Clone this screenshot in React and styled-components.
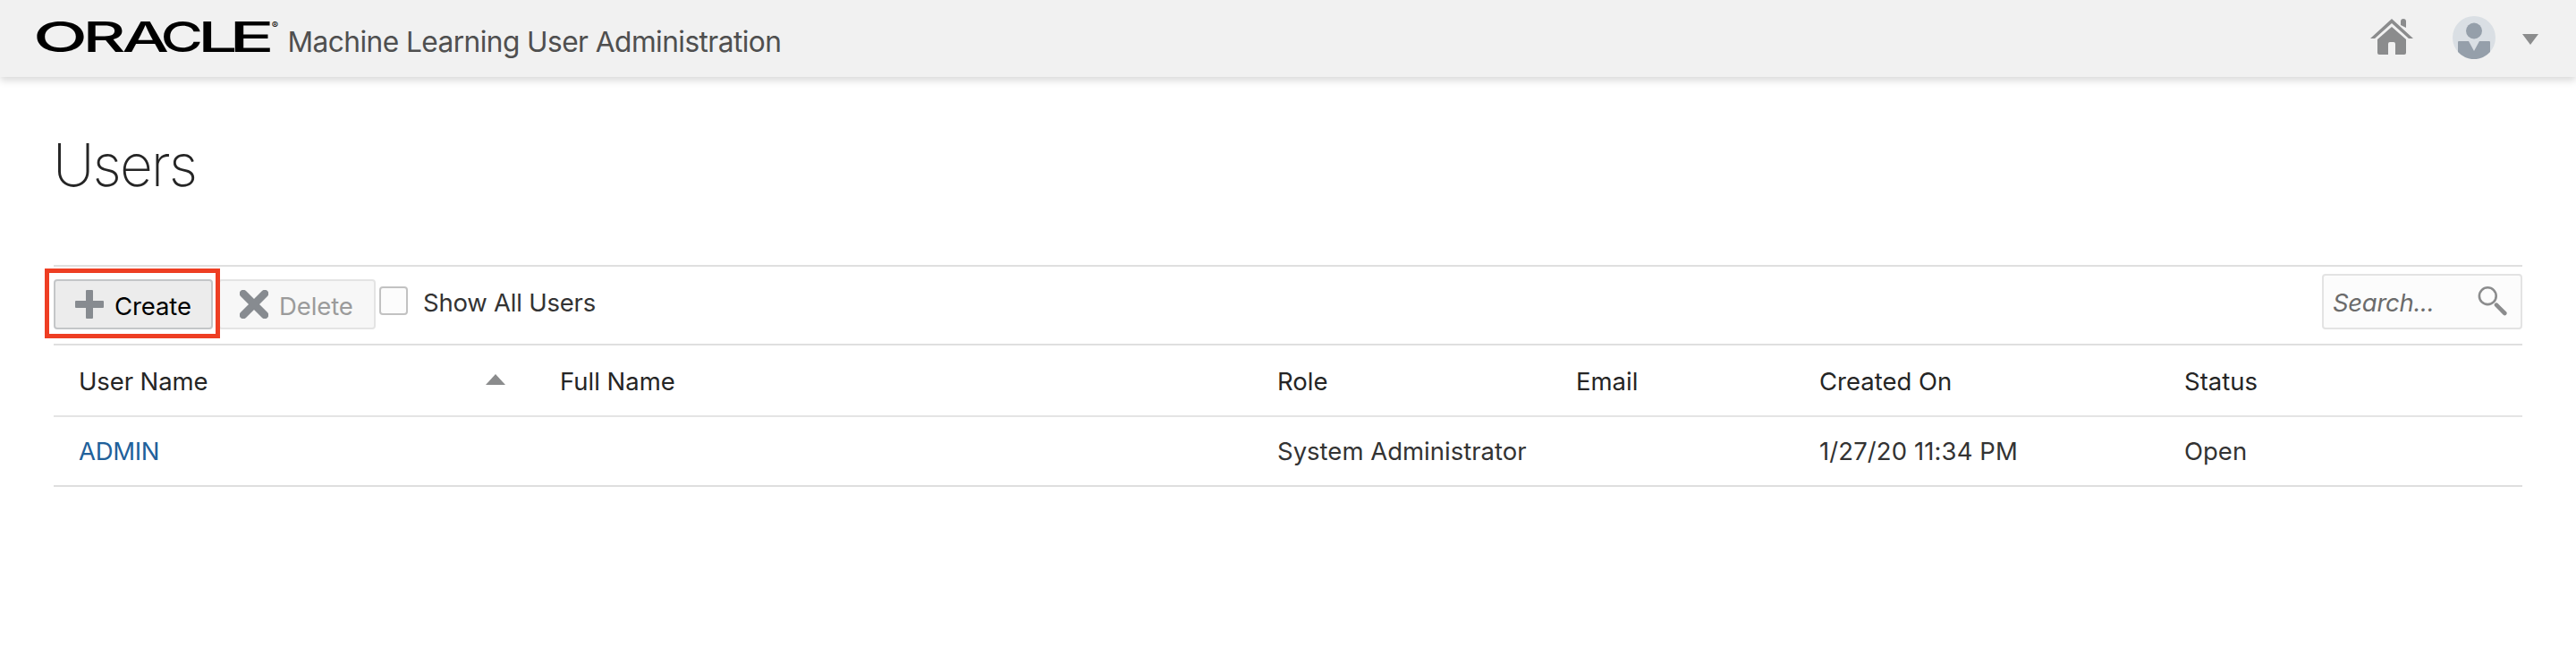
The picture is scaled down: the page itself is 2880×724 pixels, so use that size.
import React from "react";
import styled, { createGlobalStyle } from "styled-components";

const GlobalStyle = createGlobalStyle`
  * { box-sizing: border-box; }
  body { margin: 0; background: #fff; font-family: Inter, "Liberation Sans", sans-serif; font-size: 27.5px; line-height: 36px; color: #333; }
`;

const Page = styled.div`
  min-height: 724px;
  background: #fff;
`;

const Header = styled.header`
  height: 86px;
  display: flex;
  align-items: flex-start;
  background: #f1f1f1;
  padding: 0 36px;
  box-shadow: 0 4px 8px rgba(0, 0, 0, 0.15);
`;
const LogoSvg = styled.svg`
  display: block;
  width: 285.5px;
  height: 86px;
  flex: none;
`;
const AppTitle = styled.div`
  flex: 1;
  padding-top: 27px;
  line-height: 40px;
  font-size: 31.7px;
  color: #4f4f4f;
  white-space: nowrap;
  letter-spacing: -0.58px;
`;
const HeaderIcons = styled.div`
  display: flex;
  height: 84px;
  align-items: center;
`;
const HomeIcon = styled.svg`
  width: 48px;
  height: 42px;
  margin-right: 44px;
`;
const Avatar = styled.svg`
  width: 48px;
  height: 48px;
  margin-right: 30px;
`;
const Caret = styled.svg`
  width: 18px;
  height: 12px;
  margin-top: 4px;
  margin-right: 6px;
`;

const Main = styled.main`
  padding: 0 60px;
`;
const Heading = styled.h1`
  margin: 0 0 0 -1px;
  height: 210px;
  padding-top: 58px;
  line-height: 80px;
  font-size: 66.5px;
  font-weight: 200;
  color: #252525;
  letter-spacing: -2px;
  transform: scaleX(0.962);
  transform-origin: left;
`;
const Toolbar = styled.div`
  height: 90px;
  display: flex;
  align-items: flex-start;
  border-top: 2px solid #dfdfdf;
  border-bottom: 2px solid #dfdfdf;
`;
const Highlight = styled.div`
  flex: none;
  position: relative;
  z-index: 1;
  width: 196px;
  height: 78px;
  margin: 2px -2px 0 -10px;
  padding: 7px 5px;
  border: 5px solid #ee3e23;
`;
const Button = styled.button`
  height: 56px;
  width: ${(p) => p.$width}px;
  display: flex;
  align-items: center;
  margin: ${(p) => p.$top || 0}px 0 0;
  padding: 0 0 0 22px;
  font: inherit;
  border-radius: 4px;
  border: 2px solid ${(p) => (p.disabled ? "#e4e4e4" : "#c4c6c8")};
  background: ${(p) => (p.disabled ? "#f7f7f7" : "#ececec")};
  color: ${(p) => (p.disabled ? "#9b9b9b" : "#000")};
  svg {
    width: 32px;
    height: 32px;
    flex: none;
    margin-right: 12px;
    display: block;
  }
  span {
    padding-top: 4px;
    letter-spacing: -0.1px;
  }
`;
const CheckLabel = styled.label`
  display: flex;
  align-items: center;
  height: 32px;
  margin: 22px 0 0 4px;
  gap: 17px;
`;
const Check = styled.span`
  width: 32px;
  height: 32px;
  border: 2px solid #c2c2c2;
  border-radius: 4px;
  background: #fcfcfc;
`;
const CheckText = styled.span`
  padding-top: 4px;
  letter-spacing: -0.22px;
`;
const Search = styled.div`
  margin: 8px 0 0 auto;
  width: 224px;
  height: 62px;
  border: 2px solid #e3e3e3;
  border-radius: 4px;
  background: #fcfcfc;
  display: flex;
  align-items: center;
  justify-content: space-between;
  padding: 0 14px 0 10px;
  color: #6b6b6b;
  font-style: italic;
  letter-spacing: -0.3px;
  span {
    padding-top: 2px;
  }
  svg {
    width: 34px;
    height: 34px;
  }
`;
const Row = styled.div`
  display: grid;
  grid-template-columns: 538px 802px 334px 272px 408px 1fr;
  align-items: center;
  height: ${(p) => p.$h}px;
  padding: ${(p) => (p.$head ? 2 : 0)}px 0 0 28px;
  border-bottom: 2px solid ${(p) => (p.$head ? "#e4e4e4" : "#dfdfdf")};
  color: ${(p) => (p.$head ? "#252525" : "#333")};
`;
const Cell = styled.div`
  display: flex;
  align-items: center;
  white-space: nowrap;
  letter-spacing: ${(p) => p.$track || 0}px;
`;
const Sort = styled.svg`
  width: 22px;
  height: 12px;
  margin: -4px 61px 0 auto;
`;
const UserLink = styled.a`
  color: #21619b;
`;

const Logo = () => (
  <LogoSvg viewBox="36 0 285.5 86">
    <text y="58" fontFamily="Inter" fontWeight="500" fontSize="46.8">
      <tspan x="37" textLength="61" lengthAdjust="spacingAndGlyphs">O</tspan>
      <tspan x="92.5" textLength="48" lengthAdjust="spacingAndGlyphs">R</tspan>
      <tspan x="136.5" textLength="52.5" lengthAdjust="spacingAndGlyphs">A</tspan>
      <tspan x="179.5" textLength="47.5" lengthAdjust="spacingAndGlyphs">C</tspan>
      <tspan x="221" textLength="44.5" lengthAdjust="spacingAndGlyphs">L</tspan>
      <tspan x="256" textLength="51" lengthAdjust="spacingAndGlyphs">E</tspan>
    </text>
    <text x="303.7" y="32.3" fontSize="11" fontFamily="Inter">®</text>
  </LogoSvg>
);

export default function App() {
  return (
    <Page>
      <GlobalStyle />
      <Header>
        <Logo />
        <AppTitle>Machine Learning User Administration</AppTitle>
        <HeaderIcons>
          <HomeIcon viewBox="0 0 48 42" fill="#8b8c8d">
            <path d="M0 22 24 0 48 22H43L24 5 5 22Z" />
            <path d="M34 7V3Q34 0 37 0T40 3V10Z" />
            <path d="M24 9 40 23V38Q40 40 38 40H28V28Q28 26 26 26H22Q20 26 20 28V40H10Q8 40 8 38V23Z" />
          </HomeIcon>
          <Avatar viewBox="0 0 48 48">
            <circle cx="24" cy="24" r="24" fill="#dadfe4" />
            <circle cx="24" cy="16.5" r="9" fill="#959faa" />
            <path d="M6 29Q6 28 7 28H18L24 39 30 28H41Q42 28 42 29V40A24 24 0 0 1 6 40Z" fill="#959faa" />
          </Avatar>
          <Caret viewBox="0 0 18 12"><path d="M0 0H18L9 12Z" fill="#8b8c8d" /></Caret>
        </HeaderIcons>
      </Header>
      <Main>
        <Heading>Users</Heading>
        <Toolbar>
          <Highlight>
            <Button $width={178}>
              <svg viewBox="0 0 32 32"><path d="M12 1Q12 0 13 0H19Q20 0 20 1V12H31Q32 12 32 13V19Q32 20 31 20H20V31Q20 32 19 32H13Q12 32 12 31V20H1Q0 20 0 19V13Q0 12 1 12H12Z" fill="#878b90" /></svg>
              <span>Create</span>
            </Button>
          </Highlight>
          <Button $width={176} $top={14} disabled>
            <svg viewBox="0 0 32 32"><path d="M4 4 28 28M28 4 4 28" stroke="#878b90" strokeWidth="8.5" strokeLinecap="round" /></svg>
            <span>Delete</span>
          </Button>
          <CheckLabel><Check /><CheckText>Show All Users</CheckText></CheckLabel>
          <Search>
            <span>Search...</span>
            <svg viewBox="0 0 34 34" fill="none" stroke="#8b8c8d">
              <circle cx="11.3" cy="10.7" r="9.4" strokeWidth="2.6" />
              <path d="M21 20.7 30.3 30" strokeWidth="4.6" strokeLinecap="round" />
            </svg>
          </Search>
        </Toolbar>
        <Row $h={80} $head>
          <Cell $track={-0.1}>User Name<Sort viewBox="0 0 22 12"><path d="M11 0 22 12H0Z" fill="#8b8c8d" /></Sort></Cell>
          <Cell>Full Name</Cell>
          <Cell>Role</Cell>
          <Cell>Email</Cell>
          <Cell>Created On</Cell>
          <Cell>Status</Cell>
        </Row>
        <Row $h={78}>
          <Cell $track={-0.3}><UserLink>ADMIN</UserLink></Cell>
          <Cell />
          <Cell>System Administrator</Cell>
          <Cell />
          <Cell $track={0.1}>1/27/20 11:34 PM</Cell>
          <Cell>Open</Cell>
        </Row>
      </Main>
    </Page>
  );
}
